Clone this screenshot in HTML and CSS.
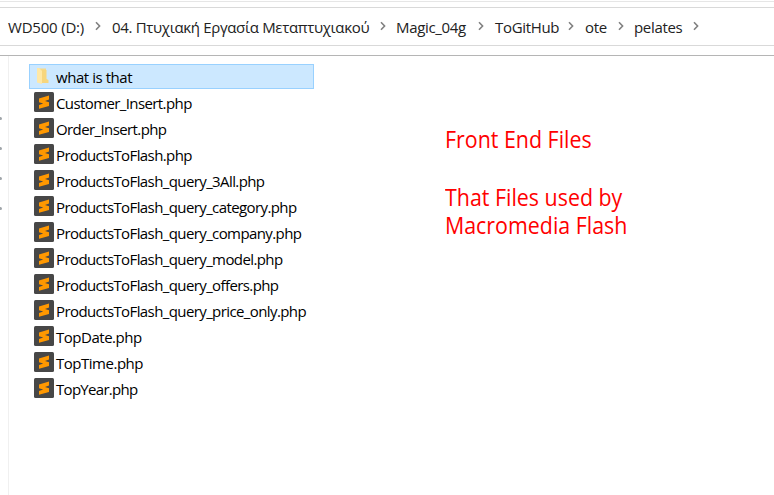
FILE: index.html
```html
<!DOCTYPE html>
<html lang="el">
<head>
<meta charset="utf-8">
<title>pelates</title>
<link rel="stylesheet" href="styles.css">
</head>
<body>
<svg width="0" height="0" class="defs" aria-hidden="true">
  <symbol id="chev" viewBox="0 0 6 10"><path d="M1 1.2 4.6 5 1 8.800" fill="none" stroke="#808080" stroke-width="1.6"/></symbol>
  <symbol id="subl" viewBox="0 0 20 20"><rect width="20" height="20" rx="1.5" fill="#474747"/><path d="M5 6.600 15 3.600v3.900l-4 1.500 4 1.300v3.700L5 16.800v-3.900l4.200-1.500L5 10.300z" fill="#ff9800"/></symbol>
</svg>
<header class="bar">
  <nav class="crumbs">
    <span class="crumb c1"><span class="label">WD500 (D:)</span><svg class="chev"><use href="#chev"/></svg></span>
    <span class="crumb c2"><span class="label">04. Πτυχιακή Εργασία Μεταπτυχιακού</span><svg class="chev"><use href="#chev"/></svg></span>
    <span class="crumb c3"><span class="label">Magic_04g</span><svg class="chev"><use href="#chev"/></svg></span>
    <span class="crumb c4"><span class="label">ToGitHub</span><svg class="chev"><use href="#chev"/></svg></span>
    <span class="crumb c5"><span class="label">ote</span><svg class="chev"><use href="#chev"/></svg></span>
    <span class="crumb c6"><span class="label">pelates</span><svg class="chev"><use href="#chev"/></svg></span>
  </nav>
</header>
<main class="body">
  <aside class="side"><i></i><i></i><i></i><i></i></aside>
  <ul class="files">
    <li class="selected"><svg class="icon" viewBox="0 0 20 20"><path d="M3 2.500h9v13H3z" fill="#f5d98b"/><path d="M3 2h2l3 3v13l-5-1.500z" fill="#ffe8a6"/><path d="M8 4h4.500v9l2 1v3H8z" fill="#f7d67d"/></svg><span>what is that</span></li>
    <li><svg class="icon"><use href="#subl"/></svg><span>Customer_Insert.php</span></li>
    <li><svg class="icon"><use href="#subl"/></svg><span>Order_Insert.php</span></li>
    <li><svg class="icon"><use href="#subl"/></svg><span>ProductsToFlash.php</span></li>
    <li><svg class="icon"><use href="#subl"/></svg><span>ProductsToFlash_query_3All.php</span></li>
    <li><svg class="icon"><use href="#subl"/></svg><span>ProductsToFlash_query_category.php</span></li>
    <li><svg class="icon"><use href="#subl"/></svg><span>ProductsToFlash_query_company.php</span></li>
    <li><svg class="icon"><use href="#subl"/></svg><span>ProductsToFlash_query_model.php</span></li>
    <li><svg class="icon"><use href="#subl"/></svg><span>ProductsToFlash_query_offers.php</span></li>
    <li><svg class="icon"><use href="#subl"/></svg><span>ProductsToFlash_query_price_only.php</span></li>
    <li><svg class="icon"><use href="#subl"/></svg><span class="top">TopDate.php</span></li>
    <li><svg class="icon"><use href="#subl"/></svg><span class="top">TopTime.php</span></li>
    <li><svg class="icon"><use href="#subl"/></svg><span class="year">TopYear.php</span></li>
  </ul>
  <section class="note">
    <p>Front End Files</p>
    <p>That Files used by<br>Macromedia Flash</p>
  </section>
</main>
</body>
</html>
```
FILE: styles.css
```css
* { box-sizing: border-box; }
body { margin: 0; height: 495px; overflow: hidden; background: #fff; color: #222; font: 15px/26px "Open Sans", "Noto Sans", sans-serif; display: flex; flex-direction: column; }
.defs { position: absolute; }
.bar { height: 56px; padding-top: 6px; border-bottom: 1px solid #b5b5b5; border-top: 1px solid #fff; box-shadow: inset 0 1px #e6e6e6; }
.crumbs { height: 39px; border-top: 1px solid #d9d9d9; border-bottom: 1px solid #d9d9d9; display: flex; align-items: center; padding-left: 8px; }
.crumb { display: flex; align-items: center; justify-content: space-between; white-space: nowrap; flex: none; }
.label { letter-spacing: -.33px; }
.c1 .label { letter-spacing: -.2px; }
.chev { width: 6px; height: 10px; margin-bottom: 2px; flex: none; }
.c1 { width: 93px; margin-right: 11px; }
.c2 { width: 274px; margin-right: 10px; }
.c3 { width: 88px; margin-right: 11px; }
.c4 { width: 79px; margin-right: 11px; }
.c5 { width: 39px; margin-right: 10px; }
.c6 { width: 65px; }
.body { flex: 1; display: flex; }
.side { width: 9px; border-right: 1px solid #f0f0f0; padding-top: 61px; }
.side i { display: block; width: 2px; height: 3px; background: #a0a5aa; border-radius: 0 2px 2px 0; margin-bottom: 27px; }
.files { list-style: none; margin: 8px 0 0 20px; padding: 0; width: 285px; }
.files li { height: 26px; padding-left: 5px; display: flex; align-items: center; white-space: nowrap; color: #000; }
.files .selected { height: 25px; background: #cce8ff; border: 1px solid #99d1ff; padding-left: 4px; }
.files .selected + li { margin-top: 1px; }
.icon { width: 20px; height: 20px; margin: 0 2px 2px 0; flex: none; }
.files span { letter-spacing: -.6px; }
.files .selected span { letter-spacing: -.45px; }
.files .top { letter-spacing: -.48px; }
.files .year { letter-spacing: -.7px; }
.note { margin: 69px 0 0 131px; color: #f00; font-size: 23px; line-height: 28px; white-space: nowrap; transform-origin: left; transform: scaleX(.93); }
.note p { margin: 0 0 30px; }
```
